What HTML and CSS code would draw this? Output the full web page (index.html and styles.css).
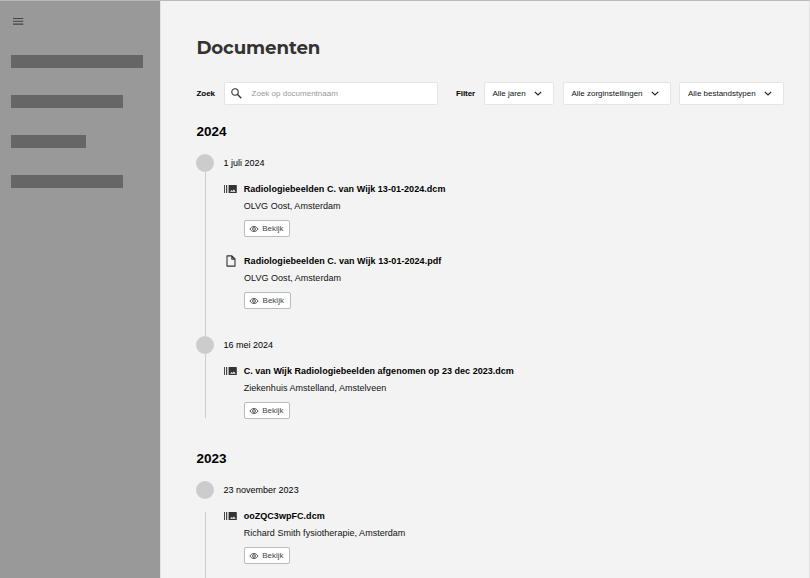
FILE: index.html
```
<!DOCTYPE html>
<html lang="nl">
<head>
<meta charset="utf-8">
<title>Documenten</title>
<link rel="stylesheet" href="styles.css">
</head>
<body>
<svg class="defs" aria-hidden="true">
  <symbol id="eye" viewBox="0 0 10 8"><path d="M1 4C2.8.7 7.2.7 9 4 7.2 7.3 2.8 7.3 1 4Z" fill="none" stroke="#444" stroke-width=".9"/><circle cx="5" cy="4" r="1.4" fill="none" stroke="#444" stroke-width=".9"/></symbol>
  <symbol id="scan" viewBox="0 0 13 8"><path d="M0 0H1V8H0ZM2 0H3.2V8H2Z" fill="#444"/><path d="M4.6 0H12.2Q12.8 0 12.8.6V7.4Q12.8 8 12.2 8H4.6ZM6 6.8H11.7L9.9 4.4 8.5 6.1 7.5 5Z" fill="#333" fill-rule="evenodd"/></symbol>
  <symbol id="file" viewBox="0 0 10 12"><path d="M1 .9H5.9L9 4V11.1H1ZM5.8 1V4.1H9" fill="none" stroke="#333" stroke-width="1.1" stroke-linejoin="round"/></symbol>
  <symbol id="chevron" viewBox="0 0 8 5"><path d="M.8.8 4 4 7.2.8" fill="none" stroke="#222" stroke-width="1.2"/></symbol>
</svg>
<div class="app">
  <aside class="sidebar">
    <svg class="menu" viewBox="0 0 11 8"><path d="M0 1.5H10.3M0 4.3H10.3M0 7.1H10.3" stroke="#444" stroke-width="1.1"/></svg>
    <div class="bar bar-long"></div>
    <div class="bar"></div>
    <div class="bar bar-short"></div>
    <div class="bar"></div>
  </aside>
  <main class="content">
    <h1>Documenten</h1>
    <div class="toolbar">
      <span class="label">Zoek</span>
      <div class="field search">
        <svg class="lens" viewBox="0 0 11 11"><circle cx="4" cy="4" r="3.2" fill="none" stroke="#333" stroke-width="1.1"/><path d="M6.3 6.3 10.3 10.3" stroke="#333" stroke-width="1.3"/></svg>
        <span>Zoek op documentnaam</span>
      </div>
      <span class="label filter-label">Filter</span>
      <div class="field select years"><span>Alle jaren</span><svg class="chevron"><use href="#chevron"/></svg></div>
      <div class="field select places"><span>Alle zorginstellingen</span><svg class="chevron"><use href="#chevron"/></svg></div>
      <div class="field select types"><span>Alle bestandstypen</span><svg class="chevron"><use href="#chevron"/></svg></div>
    </div>

    <h2>2024</h2>
    <section class="event event-double">
      <div class="rail"><i class="dot"></i><i class="line"></i></div>
      <div class="body">
        <div class="date">1 juli 2024</div>
        <article class="doc">
          <svg class="scan"><use href="#scan"/></svg>
          <div><h3>Radiologiebeelden C. van Wijk 13-01-2024.dcm</h3><p>OLVG Oost, Amsterdam</p><div class="view"><svg class="eye"><use href="#eye"/></svg><span>Bekijk</span></div></div>
        </article>
        <article class="doc doc-pdf">
          <svg class="file"><use href="#file"/></svg>
          <div><h3>Radiologiebeelden C. van Wijk 13-01-2024.pdf</h3><p>OLVG Oost, Amsterdam</p><div class="view"><svg class="eye"><use href="#eye"/></svg><span>Bekijk</span></div></div>
        </article>
      </div>
    </section>
    <section class="event">
      <div class="rail"><i class="dot"></i><i class="line"></i></div>
      <div class="body">
        <div class="date">16 mei 2024</div>
        <article class="doc">
          <svg class="scan"><use href="#scan"/></svg>
          <div><h3 class="wide">C. van Wijk Radiologiebeelden afgenomen op 23 dec 2023.dcm</h3><p>Ziekenhuis Amstelland, Amstelveen</p><div class="view"><svg class="eye"><use href="#eye"/></svg><span>Bekijk</span></div></div>
        </article>
      </div>
    </section>

    <h2 class="next-year">2023</h2>
    <section class="event event-last">
      <div class="rail"><i class="dot"></i><i class="line line-gap"></i></div>
      <div class="body">
        <div class="date">23 november 2023</div>
        <article class="doc">
          <svg class="scan"><use href="#scan"/></svg>
          <div><h3>ooZQC3wpFC.dcm</h3><p>Richard Smith fysiotherapie, Amsterdam</p><div class="view"><svg class="eye"><use href="#eye"/></svg><span>Bekijk</span></div></div>
        </article>
      </div>
    </section>
  </main>
</div>
</body>
</html>
```
FILE: styles.css
```
* { box-sizing: border-box; margin: 0; padding: 0; }
body { font-family: "Liberation Sans", Arial, sans-serif; font-size: 9px; color: #000; background: #f3f3f3; overflow: hidden; }
svg { display: block; flex: none; }
.defs { display: none; }
.app { display: flex; height: 578px; border-top: 1px solid #b9b9b9; border-right: 1px solid #e2e2e2; overflow: hidden; }
.sidebar { width: 160px; flex: none; background: #999; padding: 16px 0 0 11.4px; }
.menu { width: 11px; height: 8px; margin: 0 0 30px 1.6px; }
.bar { width: 111.6px; height: 13px; margin-bottom: 27px; background: #666; }
.bar-long { width: 132px; }
.bar-short { width: 74.4px; }
.content { flex: 1; border-left: 1px solid #e2e2e2; padding: 35px 0 0 35.4px; }
h1 { font: 700 18.2px/24px Montserrat, Inter, sans-serif; letter-spacing: -.12px; color: #333; }
.toolbar { display: flex; align-items: center; height: 23px; margin-top: 22px; font-size: 8px; }
.label { width: 28px; font-weight: 700; flex: none; }
.filter-label { margin-left: 17.6px; letter-spacing: -.08px; }
.field { display: flex; align-items: center; flex: none; height: 23px; background: #fff; border: 1px solid #e5e5e5; border-radius: 2px; }
.search { width: 214px; padding-left: 5.2px; gap: 10px; color: #999; }
.lens { width: 11px; height: 11px; }
.select { justify-content: space-between; padding: 0 11px 0 7.4px; color: #111; white-space: nowrap; }
.years { width: 70px; }
.places { width: 108px; margin-left: 9px; }
.types { width: 105.5px; margin-left: 8px; padding-left: 8px; }
.chevron { width: 8px; height: 5px; }
h2 { font-size: 13.5px; line-height: 16px; margin-top: 19px; }
.next-year { margin-top: 33px; }
.event { display: flex; height: 82px; }
.event-double { height: 182px; }
.event-last { height: 110px; }
h2 + .event { margin-top: 14px; }
.rail { width: 18px; flex: none; display: flex; flex-direction: column; align-items: center; }
.dot { width: 18px; height: 18px; flex: none; border-radius: 50%; background: #ccc; }
.line { width: 1.2px; flex: 1; background: #ccc; }
.line-gap { margin-top: 13px; }
.body { padding-left: 9.2px; white-space: nowrap; }
.date { line-height: 18px; }
.doc { display: flex; margin-top: 11px; height: 55px; }
.doc-pdf { margin-top: 17px; }
.scan { width: 13px; height: 8px; margin: 2px 7.1px 0 0; }
.file { width: 10px; height: 12px; margin: 0 8.3px 0 2.2px; }
h3 { font-size: 9px; line-height: 12px; letter-spacing: .04px; }
h3.wide { letter-spacing: .03px; }
p { line-height: 12px; margin-top: 5px; letter-spacing: .03px; color: #111; }
.view { display: flex; align-items: center; gap: 3.5px; width: 46.6px; height: 17px; margin-top: 8px; padding-left: 4px; background: #fff; border: 1px solid #bbb; border-radius: 2px; font-size: 8px; color: #444; }
.eye { width: 10px; height: 8px; }
```
